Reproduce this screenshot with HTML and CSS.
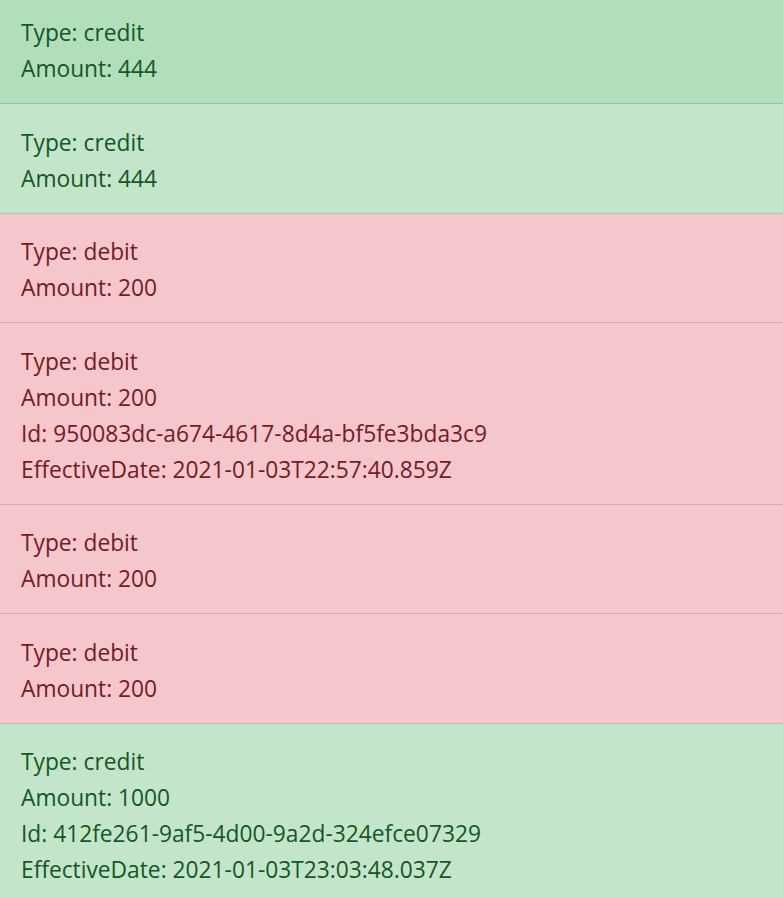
FILE: index.html
```html
<!DOCTYPE html>
<html>
<head>
<meta charset="utf-8">
<link rel="stylesheet" href="styles.css">
</head>
<body>
<ul class="list">
  <li class="item credit active"><div>Type: credit</div><div>Amount: 444</div></li>
  <li class="item credit"><div>Type: credit</div><div>Amount: 444</div></li>
  <li class="item debit"><div>Type: debit</div><div>Amount: 200</div></li>
  <li class="item debit"><div>Type: debit</div><div>Amount: 200</div><div>Id: 950083dc-a674-4617-8d4a-bf5fe3bda3c9</div><div>EffectiveDate: 2021-01-03T22:57:40.859Z</div></li>
  <li class="item debit"><div>Type: debit</div><div>Amount: 200</div></li>
  <li class="item debit"><div>Type: debit</div><div>Amount: 200</div></li>
  <li class="item credit"><div>Type: credit</div><div>Amount: 1000</div><div>Id: 412fe261-9af5-4d00-9a2d-324efce07329</div><div>EffectiveDate: 2021-01-03T23:03:48.037Z</div></li>
</ul>
</body>
</html>
```
FILE: styles.css
```css
html, body {
  margin: 0;
  padding: 0;
  background: #fff;
}
body {
  font-family: "Open Sans", "Noto Sans", sans-serif;
  font-size: 22.75px;
  line-height: 36px;
}
.list {
  list-style: none;
  margin: -5.5px 0 0 0;
  padding: 0;
  display: flex;
  flex-direction: column;
}
.item {
  padding: 20.75px 20px 15.75px 21px;
  border-bottom: 1px solid rgba(0, 0, 0, 0.125);
}
.credit {
  background: #c3e6cb;
  color: #155724;
}
.credit.active {
  background: #b1dfbb;
}
.debit {
  background: #f5c6cb;
  color: #721c24;
}
```
